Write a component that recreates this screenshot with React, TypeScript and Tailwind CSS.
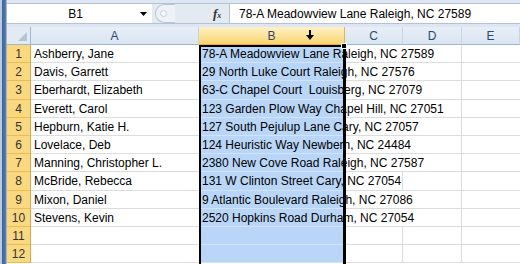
import React from "react";

const rows: [string, string, boolean][] = [
  ["Ashberry, Jane", "78-A Meadowview Lane Raleigh, NC 27589", true],
  ["Davis, Garrett", "29 North Luke Court Raleigh, NC 27576", true],
  ["Eberhardt, Elizabeth", "63-C Chapel Court  Louisberg, NC 27079", true],
  ["Everett, Carol", "123 Garden Plow Way Chapel Hill, NC 27051", true],
  ["Hepburn, Katie H.", "127 South Pejulup Lane Cary, NC 27057", true],
  ["Lovelace, Deb", "124 Heuristic Way Newbern, NC 24484", true],
  ["Manning, Christopher L.", "2380 New Cove Road Raleigh, NC 27587", true],
  ["McBride, Rebecca", "131 W Clinton Street Cary, NC 27054", false],
  ["Mixon, Daniel", "9 Atlantic Boulevard Raleigh, NC 27086", true],
  ["Stevens, Kevin", "2520 Hopkins Road Durham, NC 27054", true],
  ["", "", false],
  ["", "", false],
];

function ColHeader({ label, className }: { label: string; className: string }) {
  return (
    <div
      className={`${className} flex items-center justify-center border-r border-b border-r-[#c6d4e6] border-b-[#9eb6ce] bg-linear-to-b from-[#e8eef7] to-[#dae5f2] text-[12px] text-[#2c4a6e]`}
    >
      {label}
    </div>
  );
}

export default function App() {
  return (
    <div className="flex h-[264px] w-[520px] overflow-hidden bg-white font-['Liberation_Sans',Arial,sans-serif]">
      {/* window frame */}
      <div className="h-full w-[7px] border-l-2 border-r border-l-[#b7cbe4] border-r-[#9fb7d6] bg-linear-to-r from-[#3d6393] to-[#5b7fae]" />

      <div className="flex min-w-0 flex-1 flex-col">
        {/* formula bar */}
        <div className="flex h-[27px] flex-col bg-[#dde6f2] pt-[3px] pb-[3px]">
          <div className="flex h-[21px] border-y border-[#b4c2d4]">
            <div className="flex w-[145px] items-center bg-white">
              <span className="flex-1 pl-[4px] text-center text-[12px] text-black">B1</span>
              <svg width="7" height="4" viewBox="0 0 7 4" className="mr-[5px]">
                <path d="M0 0h7L3.5 4z" fill="#000" />
              </svg>
            </div>
            <div className="flex w-[77px] items-center bg-[#e4eaf2]">
              <div className="ml-[3px] flex h-[19px] w-[20px] items-center rounded-l-full border-l border-y border-[#b9c6d6] bg-[#eef2f7] pl-[4px]">
                <div className="h-[7px] w-[7px] rounded-full border border-[#c4ceda] bg-[#f6f8fb]" />
              </div>
              <span className="ml-[38px] font-['Liberation_Serif',serif] text-[13px] font-bold italic leading-none text-[#333]">
                f<span className="text-[8px]">x</span>
              </span>
            </div>
            <div className="flex flex-1 items-center border-l border-[#b4c2d4] bg-white pl-[9px] text-[12px] text-black whitespace-nowrap">
              78-A Meadowview Lane Raleigh, NC 27589
            </div>
          </div>
        </div>

        {/* grid */}
        <div className="relative flex-1">
          <div className="flex h-[18px]">
            <div className="relative w-[24px] border-r border-b border-r-[#9eb6ce] border-b-[#9eb6ce] bg-[#e2eaf4]">
              <svg width="9" height="9" viewBox="0 0 9 9" className="absolute right-[3px] bottom-[3px]">
                <path d="M9 0V9H0z" fill="#b6c3d2" />
              </svg>
            </div>
            <ColHeader label="A" className="w-[168px]" />
            <div className="relative flex w-[146px] items-center justify-center border-r border-b border-r-[#e7b454] border-b-[#f0a73c] bg-linear-to-b from-[#fff1c5] to-[#fad56d] text-[12px] text-[#2c4a6e]">
              B
              <svg width="8" height="10" viewBox="0 0 8 10" className="absolute top-[3px] left-[107px]">
                <path d="M3 0h2v5h3L4 10 0 5h3z" fill="#000" />
              </svg>
            </div>
            <ColHeader label="C" className="w-[58px]" />
            <ColHeader label="D" className="w-[59px]" />
            <ColHeader label="E" className="flex-1" />
          </div>

          {rows.map(([name, addr, spans], i) => (
            <div key={i} className="flex h-[18.2px] text-[12px] text-black">
              <div className="flex w-[24px] items-center justify-center border-r border-b border-r-[#e2a53d] border-b-[#e6bd5c] bg-[#f9d880] pt-[1px] text-[#333]">
                {i + 1}
              </div>
              <div className="flex w-[168px] items-center border-b border-[#dadcdd] pt-[1px] pl-[3px] whitespace-nowrap">{name}</div>
              <div className="flex w-[146px] items-center border-b border-[#d2e3f8] bg-[#b9d6f8] pt-[1px] pl-[3px] whitespace-pre">
                {addr}
              </div>
              <div className={`w-[58px] border-b border-[#dadcdd] ${spans ? "" : "border-r"}`} />
              <div className="w-[59px] border-r border-b border-[#dadcdd]" />
              <div className="flex-1 border-b border-[#dadcdd]" />
            </div>
          ))}

          {/* selected column outline */}
          <div className="pointer-events-none absolute top-[18px] -bottom-[4px] left-[192px] w-[147px] border-t-2 border-l-2 border-r-[3px] border-black" />
          <div className="absolute top-[16px] left-[334px] h-[6px] w-[6px] border border-white bg-black" />
        </div>
      </div>
    </div>
  );
}
